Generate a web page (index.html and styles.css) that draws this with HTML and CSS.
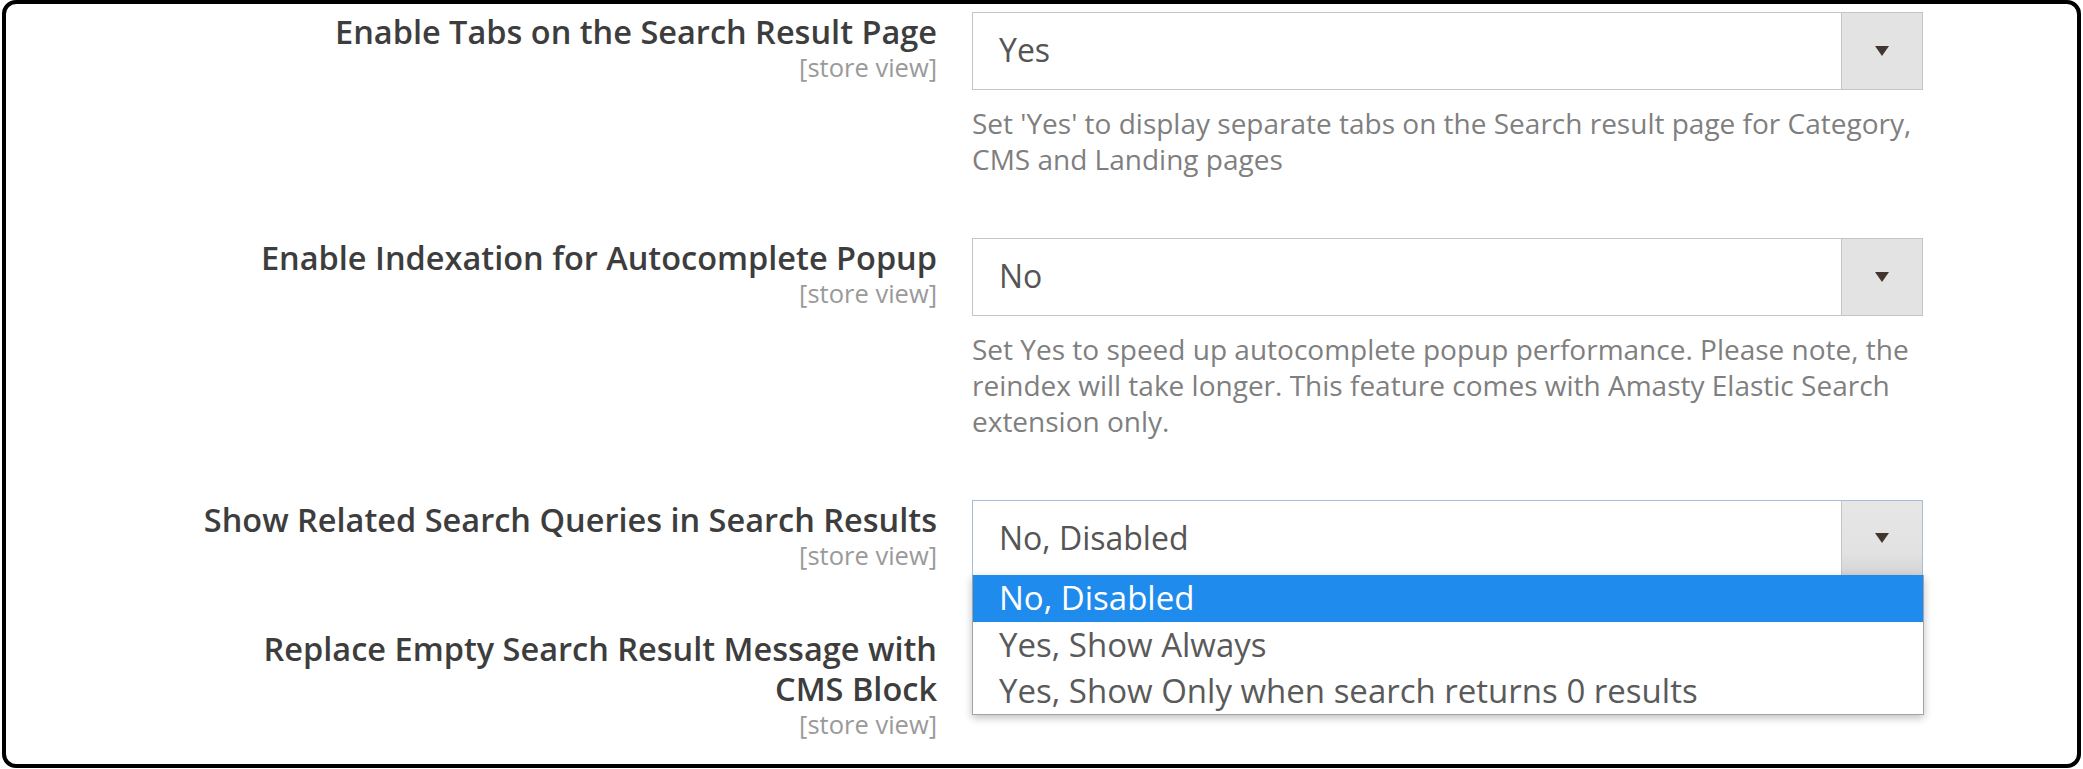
FILE: index.html
```html
<!doctype html>
<html>

<head>
    <title>search config</title>
    <meta charset="UTF-8">
    <link rel="stylesheet" href="styles.css">
</head>

<body>
    <div class="frame">
        <div class="row">
            <div class="label">
                <span>Enable Tabs on the Search Result Page</span>
                <span class="scope">[store view]</span>
            </div>
            <div class="control">
                <div class="select">
                    <span class="value">Yes</span>
                    <span class="btn"><span class="arrow"></span></span>
                </div>
                <p class="note">Set 'Yes' to display separate tabs on the Search result page for Category, CMS and Landing pages</p>
            </div>
        </div>

        <div class="row">
            <div class="label">
                <span>Enable Indexation for Autocomplete Popup</span>
                <span class="scope">[store view]</span>
            </div>
            <div class="control">
                <div class="select">
                    <span class="value">No</span>
                    <span class="btn"><span class="arrow"></span></span>
                </div>
                <p class="note">Set Yes to speed up autocomplete popup performance. Please note, the reindex will take longer. This feature comes with Amasty Elastic Search extension only.</p>
            </div>
        </div>

        <div class="row">
            <div class="label">
                <span>Show Related Search Queries in Search Results</span>
                <span class="scope">[store view]</span>
            </div>
            <div class="control">
                <div class="select focus">
                    <span class="value">No, Disabled</span>
                    <span class="btn"><span class="arrow"></span></span>
                    <ul class="options">
                        <li class="active">No, Disabled</li>
                        <li>Yes, Show Always</li>
                        <li>Yes, Show Only when search returns 0 results</li>
                    </ul>
                </div>
            </div>
        </div>

        <!-- the select of this row is hidden under the open list above -->
        <div class="row last">
            <div class="label">
                <span>Replace Empty Search Result Message with CMS Block</span>
                <span class="scope">[store view]</span>
            </div>
            <div class="control"></div>
        </div>
    </div>
</body>

</html>
```

FILE: styles.css
```css
body {
    margin: 0;
    background: #fff;
    font-family: 'Open Sans', 'Noto Sans', sans-serif;
}

.frame {
    margin: 0 2px;
    height: 768px;
    box-sizing: border-box;
    border: 4px solid #000;
    border-radius: 14px;
    padding-top: 8px;
}

.row {
    display: grid;
    grid-template-columns: 931px 951px;
    column-gap: 35px;
    margin-top: 61px;
}

.row:first-child {
    margin-top: 0;
}

.row.last {
    margin-top: 53px;
}

.label {
    display: flex;
    flex-direction: column;
    align-items: flex-end;
    text-align: right;
    font-size: 32.5px;
    font-weight: 600;
    line-height: 40px;
    color: #3d3d3d;
}

.label .scope {
    font-size: 25.5px;
    font-weight: 400;
    line-height: 30px;
    color: #9a9a9a;
}

.row.last .label span:first-child {
    width: 700px;
}

.select {
    position: relative;
    display: flex;
    height: 78px;
    box-sizing: border-box;
    border: 1px solid #c4c4c4;
    background: #fff;
}

.select .value {
    flex: 1;
    padding-left: 26px;
    font-size: 32px;
    line-height: 73px;
    color: #555;
}

.select .btn {
    width: 80px;
    border-left: 1px solid #c4c4c4;
    background: #e3e3e3;
    display: flex;
    align-items: center;
    justify-content: center;
}

.arrow {
    width: 0;
    height: 0;
    border-left: 7px solid transparent;
    border-right: 7px solid transparent;
    border-top: 10px solid #41362f;
}

.select.focus {
    z-index: 2;
    height: 76px;
    border-color: #a9bcd6;
}

.select.focus .btn {
    background: linear-gradient(#e6e6e6, #e2e2e2 70%, #d4d4d4);
}

.note {
    margin: 15px 0 0;
    font-size: 28px;
    line-height: 36px;
    color: #7f7f7f;
}

.options {
    position: absolute;
    top: 74px;
    left: -1px;
    right: -2px;
    margin: 0;
    padding: 0;
    list-style: none;
    background: #fff;
    border: 1px solid #a3a3a3;
    border-top: 0;
    box-shadow: 0 3px 8px rgba(0, 0, 0, 0.25);
}

.options li {
    height: 46px;
    padding-left: 26px;
    font-size: 33px;
    line-height: 46px;
    color: #5a5a5a;
}

.options li.active {
    height: 47px;
    background: #1f8bec;
    color: #fff;
}
```
